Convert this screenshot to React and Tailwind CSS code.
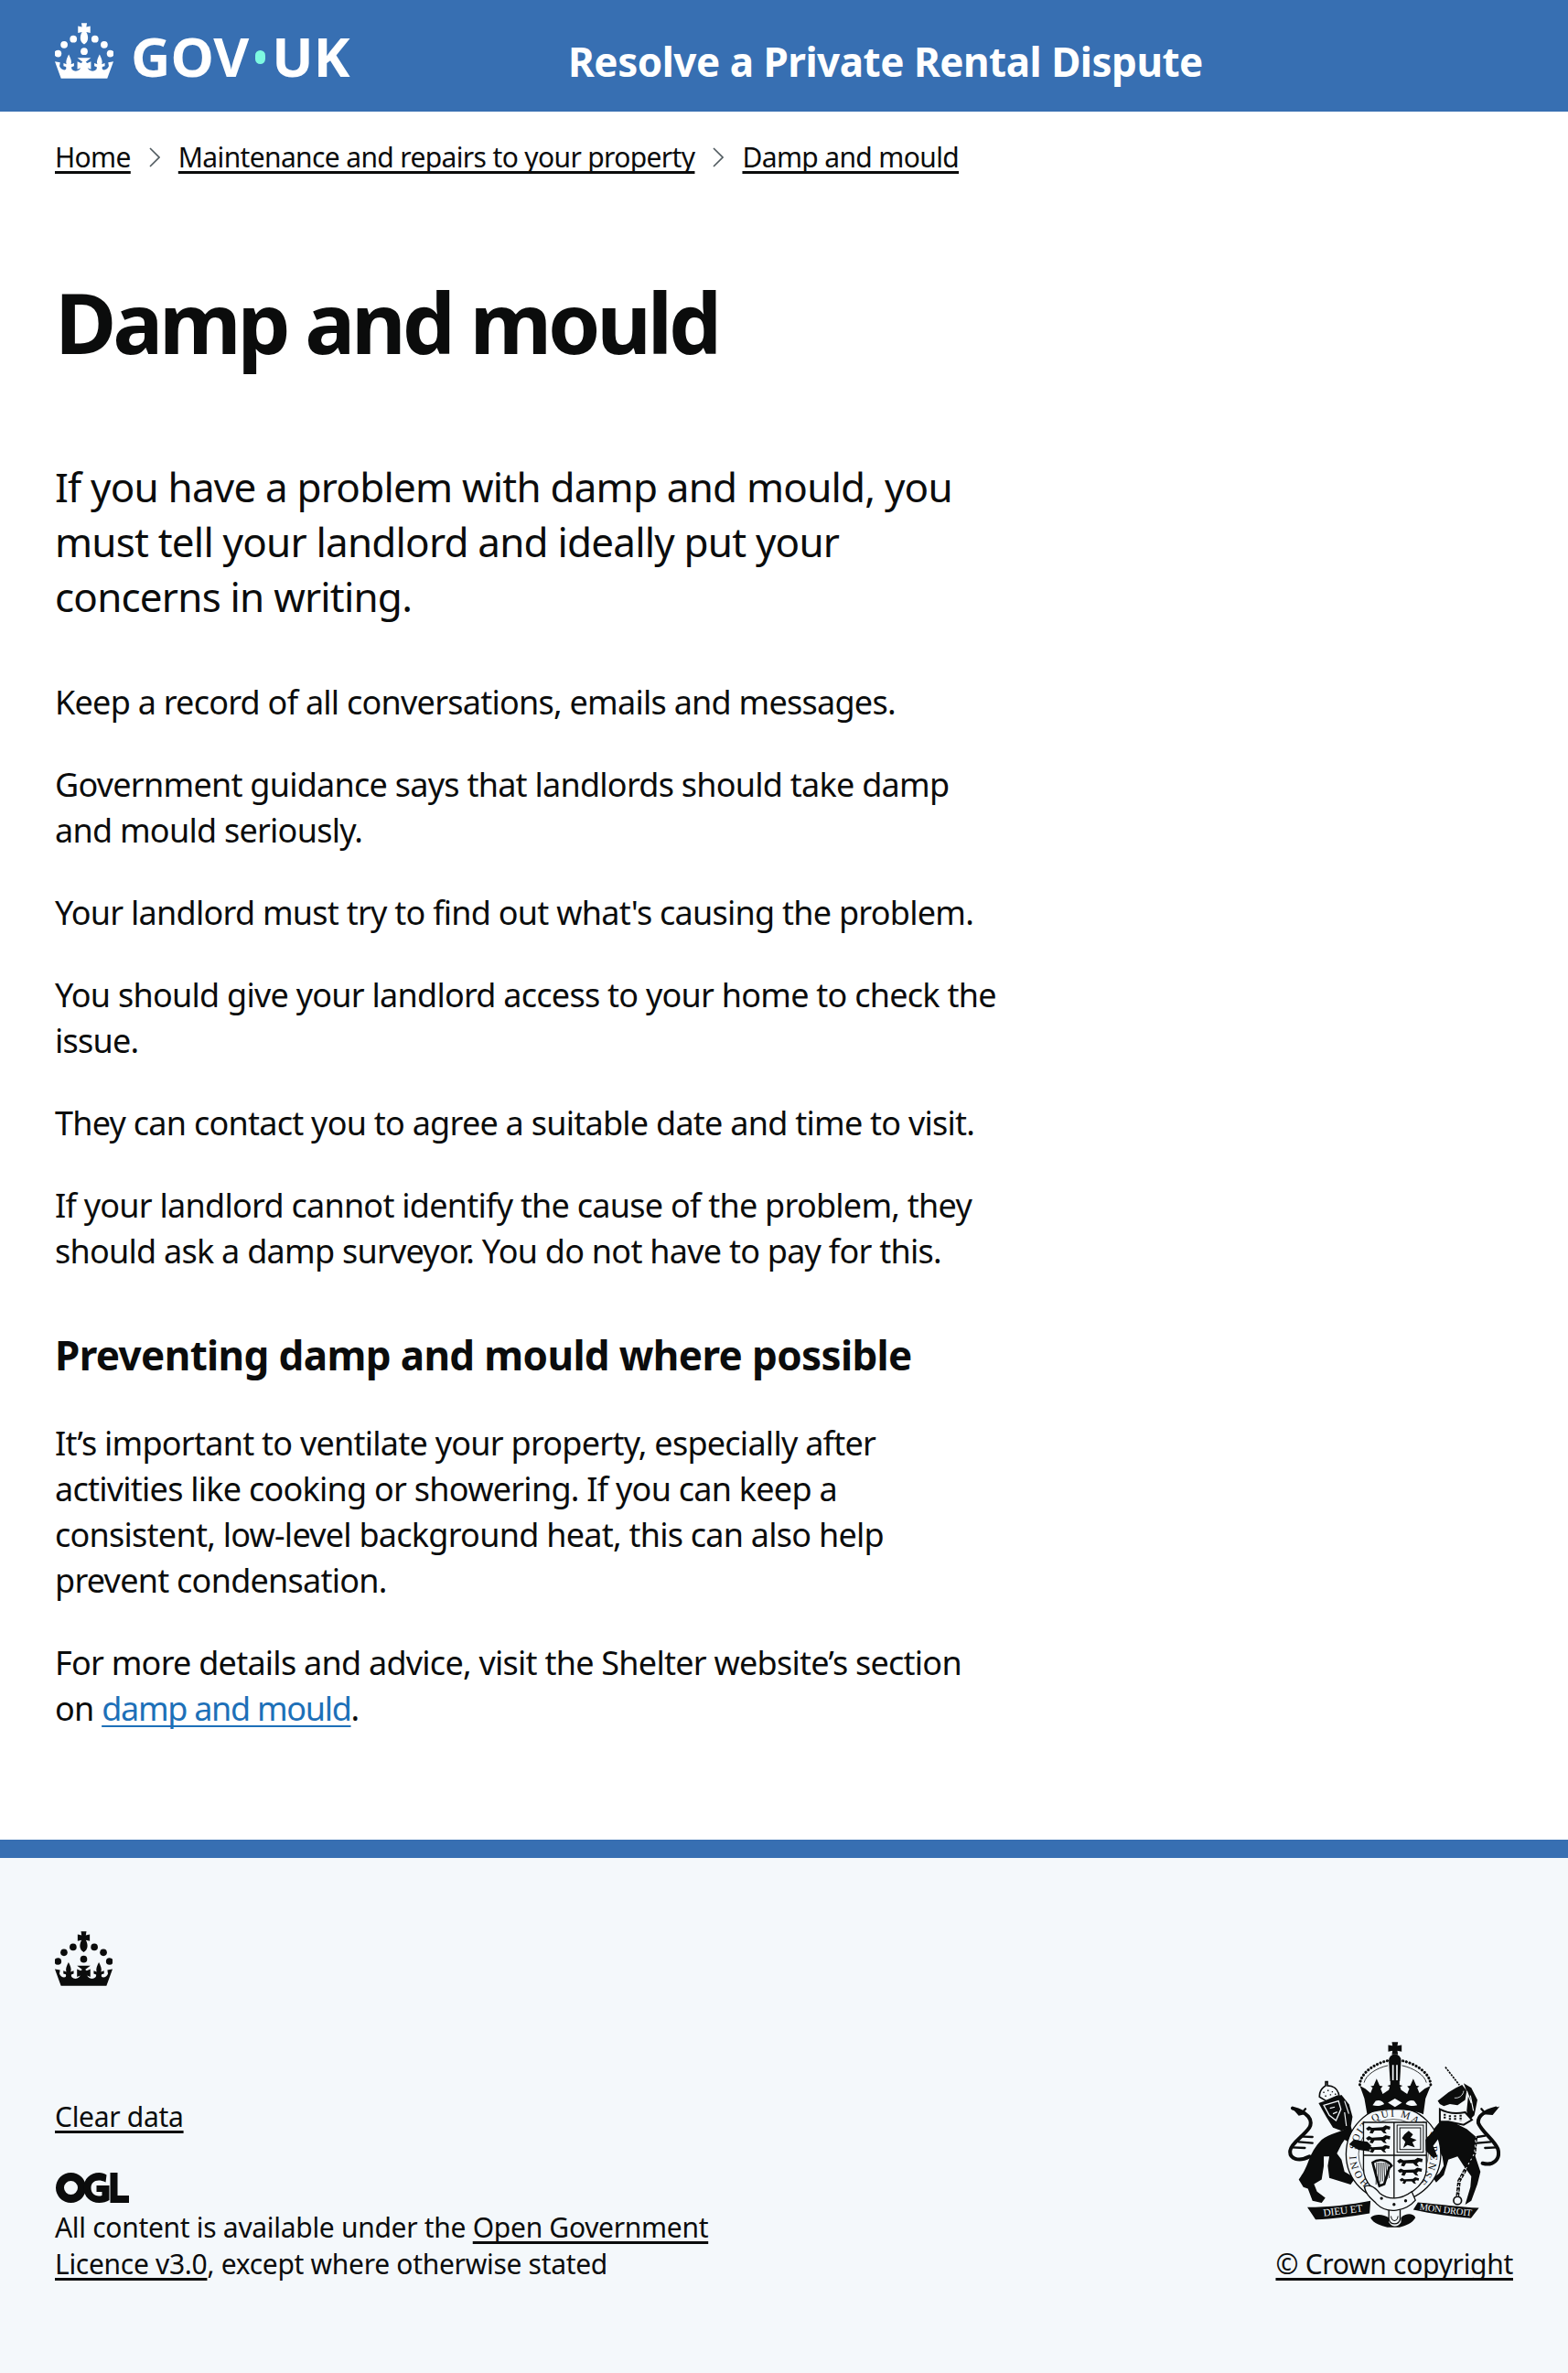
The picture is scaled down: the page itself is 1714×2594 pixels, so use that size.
function Crown({ className }) {
  const dots = [
    [60, 52],
    [30, 70],
    [10, 99],
    [130, 52],
    [160, 70],
    [180, 99],
    [95, 92],
  ];
  return (
    <svg viewBox="0 0 190 180" className={className} fill="currentColor" aria-hidden="true">
      {dots.map(([cx, cy]) => (
        <circle key={cx + "-" + cy} cx={cx} cy={cy} r="11.5" />
      ))}
      <path d="M86 0h18l-2 13 13-3v22l-13-3c8 14 8 32-7 40-15-8-15-26-7-40l-13 3V10l13 3z" />
      <path d="M0 125L17 128L15 140C18 148 24 152 30 152C36 152 38 148 36 142L28 140L28 130L38 134C34 124 40 112 45 102C50 112 56 124 52 134L62 130L62 140L54 143C53 150 58 156 68 156C76 156 82 150 84 146L73 150L73 125L85 130L90 126L73 113L117 113L100 126L105 130L117 125L117 150L106 146C108 150 114 156 122 156C132 156 137 150 136 143L128 140L128 130L138 134C134 124 140 112 145 102C150 112 156 124 152 134L162 130L162 140L154 142C152 148 154 152 160 152C166 152 172 148 175 140L173 128L190 125L170 180L20 180Z" />
    </svg>
  );
}

function PassantLion({ x, y, s = 1 }) {
  return (
    <path
      transform={`translate(${x} ${y}) scale(${s})`}
      d="M0 10L10 3L20 8L55 6L64 0L80 4L78 14L68 12L62 18L68 27L58 25L50 17L28 17L22 27L12 25L16 15L6 17Z"
    />
  );
}

// royal arms
function Arms() {
  const bg = "#f4f8fb";
  const ink = "#0b0c0c";
  const harpStrings = [405, 411, 417, 423, 429, 435, 441];
  return (
    <svg viewBox="115 65 695 607" className="h-[203px] w-[232px]" aria-hidden="true">
      {/* lion's tail */}
      <g fill="none" stroke={ink} strokeWidth="12" strokeLinecap="round">
        <path d="M185 440C150 458 118 448 122 420C126 395 165 375 185 345C198 320 180 295 130 282" />
        <path d="M165 375L195 376M150 392L195 396M128 410L170 412M165 292L172 284" strokeWidth="7" />
      </g>
      <path d="M125 278L160 292L175 300L150 306Z" fill={ink} />
      {/* lion */}
      <g fill={ink}>
        <path d="M320 340C290 360 250 365 225 385C205 405 190 430 180 460C172 480 165 495 150 515L165 540L180 545L195 585L225 592L237 575L210 555L200 530L225 515L232 470L232 440L250 440L245 470L250 510L320 532L335 510L300 490L290 450L275 430L290 400L300 385L345 410L375 422L375 395L335 385Z" />
        <path d="M215 265L290 238L315 270L326 310L320 345L290 356L262 345L240 310Z" />
        <path d="M232 272L280 258L288 285L272 322L250 305Z" fill="none" stroke={bg} strokeWidth="4" />
        <path d="M300 258L314 300M300 295L306 340M252 282L268 278M262 300L276 294" fill="none" stroke={bg} strokeWidth="3.500" />
        <path d="M218 245C216 222 232 212 238 208V195H244V208C262 208 278 218 282 240L240 258Z" fill={bg} stroke={ink} strokeWidth="5" />
        <path d="M230 228h4v4h-4zM244 222h4v4h-4zM258 226h4v4h-4zM236 240h4v4h-4zM252 236h4v4h-4zM268 234h4v4h-4z" />
      </g>
      {/* unicorn's tail, horn and body */}
      <g fill="none" stroke={ink} strokeWidth="12" strokeLinecap="round">
        <path d="M752 462C785 472 812 450 802 415C790 385 750 360 738 330C735 305 765 290 795 282" />
        <path d="M760 372L735 376M778 392L735 396M798 410L760 412M755 292L748 284" strokeWidth="7" />
        <path d="M630 147L676 206" strokeWidth="5" strokeDasharray="7 3" strokeLinecap="butt" />
      </g>
      <path d="M808 276L770 290L755 302L785 304Z" fill={ink} />
      <g fill={ink}>
        <path d="M610 328L650 325L700 350L730 375L725 430L745 490L735 530L715 585L695 598L712 540L715 505L690 470L670 440L640 450L625 500L600 525L590 510L610 495L625 470L620 440L602 405L605 450L590 445L570 420L565 395L580 365Z" />
        <path d="M605 258L640 230L665 215L685 205L700 225L695 255L670 272L645 268L625 275L612 268Z" />
        <path d="M690 200L715 215L735 255L725 305L705 325L700 290L705 240Z" />
        <path d="M700 225L715 265M712 240L722 290" fill="none" stroke={bg} strokeWidth="3.500" />
        <path d="M660 248C675 250 688 240 690 225" fill="none" stroke={bg} strokeWidth="2.500" />
        <path d="M612 285C640 300 670 300 695 295L717 320L690 336L640 326L612 326Z" fill={bg} stroke={ink} strokeWidth="6" />
        <path d="M628 300v16M645 305v16M662 305v18M680 303v20" stroke={ink} strokeWidth="7" strokeDasharray="6 3" />
        <circle cx="670" cy="584" r="13" fill="none" stroke={ink} strokeWidth="5" />
        <path d="M670 570L675 520L725 430L730 375" fill="none" stroke={ink} strokeWidth="11" strokeDasharray="13 3" />
        <path d="M670 570L675 520L725 430L730 375" fill="none" stroke={bg} strokeWidth="3" strokeDasharray="6 10" />
      </g>
      {/* garter and shield */}
      <circle cx="460" cy="432" r="155" fill={bg} stroke={ink} strokeWidth="4" />
      <circle cx="460" cy="432" r="114" fill="none" stroke={ink} strokeWidth="2" />
      <path id="garter" d="M382 525A122 122 0 1 1 538 525" fill="none" />
      <text fill={ink} fontSize="34" className="font-['Liberation_Serif',serif]">
        <textPath href="#garter" textLength="590">HONI SOIT QUI MAL Y PENSE</textPath>
      </text>
      <path d="M362 328H568V480C568 530 515 565 462 588C410 565 362 530 362 480Z" fill={bg} stroke={ink} strokeWidth="4" />
      <path d="M462 328V588M362 436H568" stroke={ink} strokeWidth="4" />
      <g fill={ink}>
        <PassantLion x={370} y={338} />
        <PassantLion x={370} y={370} />
        <PassantLion x={372} y={402} s={0.95} />
        <PassantLion x={472} y={444} s={1.05} />
        <PassantLion x={474} y={476} />
        <PassantLion x={480} y={508} s={0.8} />
        <path d="M496 368L510 356L524 368L516 378L536 386L522 393L530 410L506 402L492 412L499 392L488 380Z" />
      </g>
      <path d="M472 337H558V426H472ZM481 346H549V417H481Z" fill="none" stroke={ink} strokeWidth="3" />
      {/* paw and foreleg lie over the shield */}
      <path d="M330 385L375 392L388 405L375 412L385 424L345 418L315 400Z" fill={ink} />
      <path d="M600 345L565 385L566 420L590 445L604 440L590 405L612 375Z" fill={ink} />
      {/* harp */}
      <path d="M392 460C410 446 442 450 454 470L446 478L430 530L414 536L404 505Z" fill={bg} stroke={ink} strokeWidth="8" />
      <g stroke={ink} strokeWidth="2.500">
        {harpStrings.map((x) => (
          <line key={x} x1={x} y1="460" x2={x - 2 + (x - 405) * 0.2} y2={532 - (x - 405) * 0.6} />
        ))}
      </g>
      {/* royal crown */}
      <g fill={ink}>
        <path d="M455 65h20l-2 12 14-2v22l-14-3 2 12h-20l2-12-14 3V75l14 2z" />
        <ellipse cx="465" cy="125" rx="20" ry="20" />
        <path d="M445 128h40l-4 65h-32z" />
        <path d="M456 140h5v50h-5zM469 140h5v50h-5z" fill={bg} />
        <path d="M350 208L368 218L385 232L392 215L385 210L395 208L405 185L415 208L425 210L418 218L425 235L445 222L448 212L440 208L450 205L450 190L480 190L480 205L490 208L482 212L485 222L505 235L512 218L505 210L515 208L525 185L535 208L545 210L538 215L545 232L562 218L582 208L565 250L558 302C520 282 410 282 374 302L365 250Z" />
        <path d="M465 250L488 264L465 278L442 264ZM402 258C412 254 425 258 430 268C420 274 405 276 392 272ZM528 258C518 254 505 258 500 268C510 274 525 276 538 272Z" fill={bg} />
      </g>
      <path d="M350 205C352 165 400 135 442 126M582 205C580 165 530 135 488 126" fill="none" stroke={ink} strokeWidth="9" strokeLinecap="round" strokeDasharray="0.5 11" />
      <path d="M364 198C370 172 405 150 442 142M568 198C562 172 525 150 488 142" fill="none" stroke={ink} strokeWidth="2.500" />
      {/* motto */}
      <path d="M178 606C250 606 320 598 385 585L382 626C320 636 260 645 205 646Z" fill={ink} />
      <path d="M540 590C610 596 680 606 740 608L714 642C650 636 590 628 525 614Z" fill={ink} />
      <path d="M385 640C400 625 430 630 445 640V655C455 672 475 672 485 655V640C500 625 525 625 532 640C520 660 500 665 480 672H440C420 665 395 660 385 640Z" fill={ink} />
      <path d="M445 610H482V645C478 665 450 665 445 645Z" fill={bg} stroke={ink} strokeWidth="4" />
      <path d="M452 635C455 655 472 655 475 635" fill="none" stroke={ink} strokeWidth="3" />
      <path d="M365 540C375 530 395 535 415 560C440 580 480 585 520 555L532 583C500 620 440 630 405 595C385 575 370 565 365 540Z" fill={bg} stroke={ink} strokeWidth="4" />
      <circle cx="421" cy="577" r="5" fill={ink} />
      <circle cx="462" cy="597" r="5" fill={ink} />
      <circle cx="500" cy="585" r="5" fill={ink} />
      <text x="296" y="628" fill={bg} fontSize="34" textAnchor="middle" transform="rotate(-7 296 628)" className="font-['Liberation_Serif',serif]">DIEU ET</text>
      <text x="630" y="625" fill={bg} fontSize="31" textAnchor="middle" transform="rotate(7 630 625)" className="font-['Liberation_Serif',serif]">MON DROIT</text>
    </svg>
  );
}

const linkClass = "underline decoration-[3px] underline-offset-[4px] [text-decoration-skip-ink:none]";

function BreadcrumbSep() {
  return (
    <svg viewBox="0 0 12 22" className="mx-[20px] h-[22px] w-[12px] text-[#505a5f]" fill="none" stroke="currentColor" strokeWidth="1.600" aria-hidden="true">
      <path d="M1 1l10 10-10 10" />
    </svg>
  );
}

export default function App() {
  return (
    <div className="min-h-[2594px] bg-white font-['Noto_Sans',sans-serif] tracking-[-0.64px] text-[#0b0c0c]">
      <header className="flex h-[122px] items-center bg-[#376fb2] pl-[60px] text-white">
        <Crown className="mb-[12px] h-[61px] w-[64px]" />
        <div className="ml-[19px] flex w-[478px] items-center text-[60px] leading-none font-bold tracking-[0px]">
          GOV
          <span className="mx-[7px] mt-[2px] h-[15px] w-[11px] rounded-full bg-[#7ef9e1]" />
          UK
        </div>
        <div className="pt-[11px] text-[44px] font-bold tracking-[-0.5px]">Resolve a Private Rental Dispute</div>
      </header>

      <nav className="flex items-center px-[60px] pt-[30px] text-[30px] leading-[40px]">
        <a className={linkClass}>Home</a>
        <BreadcrumbSep />
        <a className={linkClass}>Maintenance and repairs to your property</a>
        <BreadcrumbSep />
        <a className={linkClass}>Damp and mould</a>
      </nav>

      <main className="w-[1152px] px-[60px] pt-[110px] pb-[118px]">
        <h1 className="text-[92px] leading-[100px] font-bold tracking-[-4.2px]">Damp and mould</h1>
        <p className="mt-[100px] text-[44px] leading-[60px] tracking-[-0.8px]">
          If you have a problem with damp and mould, you must tell your landlord and ideally put your concerns in writing.
        </p>
        <div className="mt-[61px] flex flex-col gap-[40px] text-[36px] leading-[50px] tracking-[-0.75px]">
          <p>Keep a record of all conversations, emails and messages.</p>
          <p>Government guidance says that landlords should take damp and mould seriously.</p>
          <p>Your landlord must try to find out what's causing the problem.</p>
          <p>You should give your landlord access to your home to check the issue.</p>
          <p>They can contact you to agree a suitable date and time to visit.</p>
          <p>If your landlord cannot identify the cause of the problem, they should ask a damp surveyor. You do not have to pay for this.</p>
        </div>
        <h2 className="mt-[58px] text-[44px] leading-[60px] font-bold">Preventing damp and mould where possible</h2>
        <div className="mt-[42px] flex flex-col gap-[40px] text-[36px] leading-[50px] tracking-[-0.75px]">
          <p>It’s important to ventilate your property, especially after activities like cooking or showering. If you can keep a consistent, low-level background heat, this can also help prevent condensation.</p>
          <p>
            For more details and advice, visit the Shelter website’s section on{" "}
            <a className="tracking-[-1.3px] text-[#1d70b8] underline decoration-2 underline-offset-[5px] [text-decoration-skip-ink:none]">damp and mould</a>.
          </p>
        </div>
      </main>

      <footer className="border-t-[20px] border-[#376fb2] bg-[#f4f8fb] px-[60px] pt-[80px] pb-[99px] tracking-[-0.3px]">
        <Crown className="h-[60px] w-[63px]" />
        <div className="mt-[61px] flex items-end justify-between">
          <div className="text-[30px] leading-[40px]">
            <a className={linkClass}>Clear data</a>
            <svg viewBox="0 0 80 33" className="mt-[41px] mb-[7px] h-[33px] w-[81px]" fill="#0b0c0c" aria-hidden="true">
              <path d="M17 0a16.500 16.500 0 1 0 0 33 16.500 16.500 0 0 0 0-33zm0 9a7.500 7.500 0 1 1 0 15 7.500 7.500 0 0 1 0-15z" />
              <path d="M48 0c-10 0-17 7-17 16.500S38 33 48 33c4 0 8-1 11-3V14H45v7h6v4c-7 2-12-2-12-8.500 0-7 7-10.500 16-6l1-8c-2-1.500-5-2.500-8-2.500z" />
              <path d="M60 0h8v25h13v8H60z" />
            </svg>
            <p className="w-[720px]">
              All content is available under the <a className={linkClass}>Open Government Licence v3.0</a>, except where otherwise stated
            </p>
          </div>
          <div className="flex flex-col items-center text-[30px] leading-[40px]">
            <Arms />
            <a className={"mt-[20px] " + linkClass}>© Crown copyright</a>
          </div>
        </div>
      </footer>
    </div>
  );
}
